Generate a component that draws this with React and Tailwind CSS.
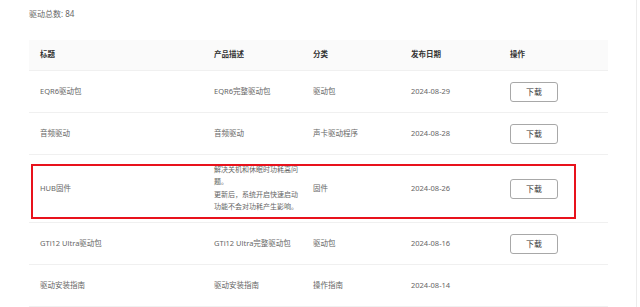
const rows = [
  { title: "EQR6驱动包", desc: "EQR6完整驱动包", category: "驱动包", date: "2024-08-29", download: true },
  { title: "音频驱动", desc: "音频驱动", category: "声卡驱动程序", date: "2024-08-28", download: true },
  {
    title: "HUB固件",
    desc: ["解决关机和休眠时功耗高问题。", "更新后，系统开启快速启动功能不会对功耗产生影响。"],
    category: "固件",
    date: "2024-08-26",
    download: true,
    highlight: true,
  },
  { title: "GTi12 Ultra驱动包", desc: "GTi12 Ultra完整驱动包", category: "驱动包", date: "2024-08-16", download: true },
  { title: "驱动安装指南", desc: "驱动安装指南", category: "操作指南", date: "2024-08-14", download: false },
];

const cols = "grid grid-cols-[174px_99px_98px_99px_109px]";

function DownloadButton() {
  return (
    <button
      type="button"
      className="flex h-[20px] w-[48px] items-center justify-center rounded-[3px] border border-[#a8a8a8] bg-white text-[8px] text-[#333]"
    >
      下载
    </button>
  );
}

export default function App() {
  return (
    <div
      className="h-[307px] w-[640px] overflow-hidden bg-white"
      style={{ fontFamily: '"Noto Sans", "Noto Sans CJK SC", sans-serif' }}
    >
      <div className="h-full w-[637px] border-r border-[#ececec] pl-[29px]">
        <p className="flex h-[28px] items-center text-[8px] text-[#666]">驱动总数: 84</p>

        <div className="mt-[12px] w-[579px]">
          <div className={`${cols} h-[31px] items-center border-b border-[#f0f0f0] bg-[#fafafa] text-[7.5px] font-semibold text-[#333]`}>
            <span className="pl-[11px]">标题</span>
            <span className="pl-[11px]">产品描述</span>
            <span className="pl-[11px]">分类</span>
            <span className="pl-[11px]">发布日期</span>
            <span className="pl-[11px]">操作</span>
          </div>

          {rows.map((row) => (
            <div
              key={row.title}
              className={`${cols} relative items-center border-b border-[#f0f0f0] text-[7.5px] text-[#666] ${
                row.highlight ? "h-[68px]" : "h-[42px]"
              }`}
            >
              <span className="pl-[11px]">{row.title}</span>
              <div className="pl-[11px]">
                {Array.isArray(row.desc) ? (
                  <div className="w-[86px] text-[7px] leading-[12.5px]">
                    {row.desc.map((line) => (
                      <p key={line}>{line}</p>
                    ))}
                  </div>
                ) : (
                  row.desc
                )}
              </div>
              <span className="pl-[11px]">{row.category}</span>
              <span className="pl-[11px]">{row.date}</span>
              <div className="pl-[11px]">{row.download ? <DownloadButton /> : null}</div>
              {row.highlight ? (
                <div className="pointer-events-none absolute left-[2px] top-[9px] h-[55px] w-[545px] border-2 border-[#e8121c]" />
              ) : null}
            </div>
          ))}
        </div>
      </div>
    </div>
  );
}
